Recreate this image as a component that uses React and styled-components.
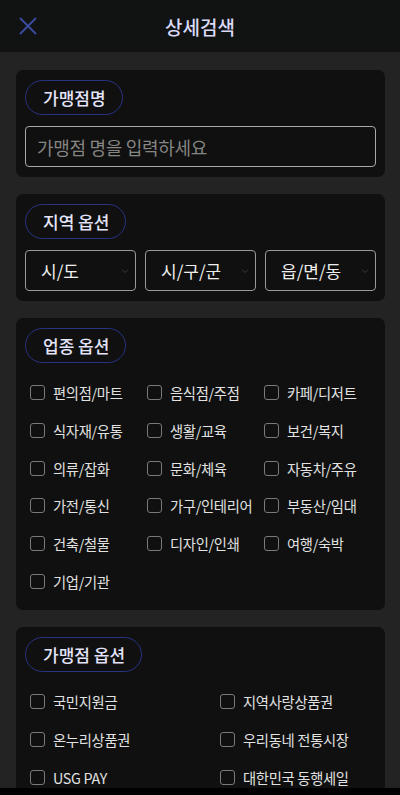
import styled, { createGlobalStyle } from 'styled-components'

const GlobalStyle = createGlobalStyle`
	* {
		box-sizing: border-box;
	}
	body {
		margin: 0;
		background-color: #222322;
		font-family: 'Noto Sans CJK KR', 'Noto Sans', sans-serif;
		color: #e6e6e6;
	}
`

const Page = styled.div`
	min-height: 795px;
	background-color: #222322;
`

const Header = styled.header`
	height: 52px;
	background-color: #111212;
	display: flex;
	align-items: center;
	justify-content: center;
	position: relative;
`

const CloseButton = styled.button`
	position: absolute;
	left: 14px;
	top: 12px;
	width: 28px;
	height: 28px;
	padding: 0;
	border: none;
	background: none;
	display: flex;
	align-items: center;
	justify-content: center;
`

const Title = styled.h1`
	margin: 0;
	font-size: 19px;
	font-weight: 500;
	color: #dadaf8;
`

const Content = styled.main`
	display: flex;
	flex-direction: column;
	gap: 17px;
	padding: 18px 15px 20px 16px;
`

const Card = styled.section`
	background-color: #0f100f;
	border-radius: 7px;
	padding: 10px 9px 10px;
	display: flex;
	flex-direction: column;
	gap: 11px;
`

const Pill = styled.div`
	align-self: flex-start;
	height: 35px;
	padding: 0 16px 0 17px;
	border: 1px solid #283382;
	border-radius: 18px;
	display: flex;
	align-items: center;
	font-size: 17px;
	font-weight: 500;
	color: #e4e4fa;
`

const TextInput = styled.input`
	width: 100%;
	height: 41px;
	padding: 0 11px;
	background-color: #0f100f;
	border: 1px solid #a8a8a4;
	border-radius: 4px;
	font-family: inherit;
	font-size: 18px;
	letter-spacing: -0.3px;
	color: #eee;
	outline: none;

	&::placeholder {
		color: #858583;
	}
`

const SelectRow = styled.div`
	display: grid;
	grid-template-columns: repeat(3, 1fr);
	gap: 9px;
`

const SelectBox = styled.div`
	height: 41px;
	border: 1px solid #9a9a98;
	border-radius: 4px;
	padding: 0 6px 0 15px;
	display: flex;
	align-items: center;
	justify-content: space-between;
	font-size: 17px;
	color: #eeeeee;
`

const CheckGrid = styled.div`
	display: grid;
	grid-template-columns: ${p => p.$columns};
	grid-auto-rows: 37.7px;
`

const CheckItem = styled.label`
	display: flex;
	align-items: center;
	gap: 8px;
	padding-left: 5px;
	font-size: 14.3px;
	letter-spacing: -0.3px;
	color: #e2e2e2;
	white-space: nowrap;
`

const Box = styled.span`
	width: 15px;
	height: 15px;
	flex-shrink: 0;
	border: 1.5px solid #7a7a78;
	border-radius: 3px;
`

const NavShade = styled.div`
	position: fixed;
	left: 0;
	right: 0;
	bottom: 0;
	height: 7px;
	background-color: #000;
`

const regions = ['시/도', '시/구/군', '읍/면/동']

const categories = [
	'편의점/마트',
	'음식점/주점',
	'카페/디저트',
	'식자재/유통',
	'생활/교육',
	'보건/복지',
	'의류/잡화',
	'문화/체육',
	'자동차/주유',
	'가전/통신',
	'가구/인테리어',
	'부동산/임대',
	'건축/철물',
	'디자인/인쇄',
	'여행/숙박',
	'기업/기관',
]

const storeOptions = [
	'국민지원금',
	'지역사랑상품권',
	'온누리상품권',
	'우리동네 전통시장',
	'USG PAY',
	'대한민국 동행세일',
]

function Chevron() {
	return (
		<svg width="8" height="6" viewBox="0 0 8 6">
			<path d="M1 1.5 L4 4.5 L7 1.5" fill="none" stroke="#3c3c3c" strokeWidth="1" />
		</svg>
	)
}

function Check({ children }) {
	return (
		<CheckItem>
			<Box />
			{children}
		</CheckItem>
	)
}

export default function App() {
	return (
		<Page>
			<GlobalStyle />
			<Header>
				<CloseButton aria-label="닫기">
					<svg width="22" height="22" viewBox="0 0 22 22">
						<path d="M3 3 L19 19 M19 3 L3 19" stroke="#3a4a9e" strokeWidth="2" fill="none" />
					</svg>
				</CloseButton>
				<Title>상세검색</Title>
			</Header>
			<Content>
				<Card>
					<Pill>가맹점명</Pill>
					<TextInput placeholder="가맹점 명을 입력하세요" />
				</Card>
				<Card>
					<Pill>지역 옵션</Pill>
					<SelectRow>
						{regions.map(r => (
							<SelectBox key={r}>
								{r}
								<Chevron />
							</SelectBox>
						))}
					</SelectRow>
				</Card>
				<Card>
					<Pill>업종 옵션</Pill>
					<CheckGrid $columns="repeat(3, 1fr)">
						{categories.map(c => (
							<Check key={c}>{c}</Check>
						))}
					</CheckGrid>
				</Card>
				<Card>
					<Pill>가맹점 옵션</Pill>
					<CheckGrid $columns="190px 1fr">
						{storeOptions.map(o => (
							<Check key={o}>{o}</Check>
						))}
					</CheckGrid>
				</Card>
			</Content>
			<NavShade />
		</Page>
	)
}
